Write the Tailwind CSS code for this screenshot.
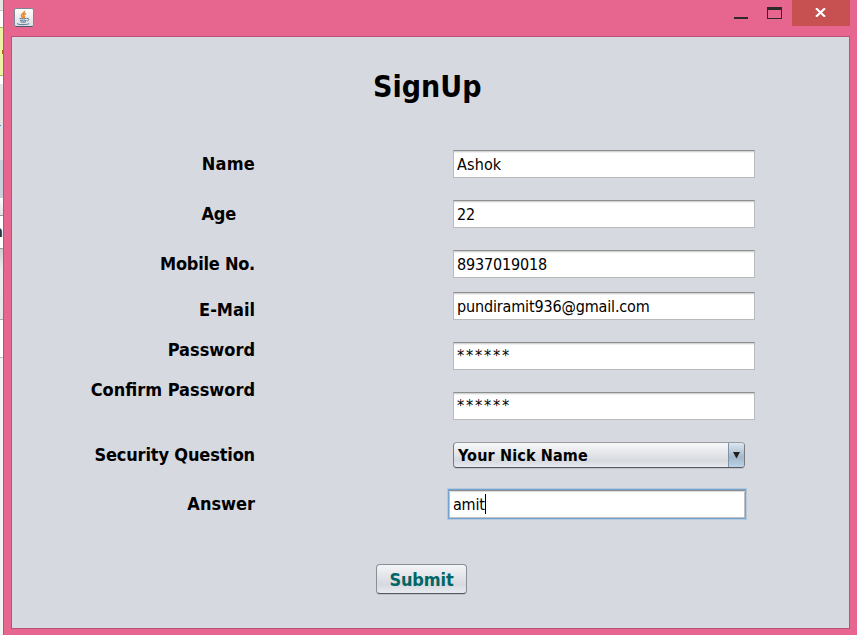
<!DOCTYPE html>
<html lang="en">
<head>
<meta charset="utf-8">
<title>SignUp</title>
<script src="https://cdn.jsdelivr.net/npm/@tailwindcss/browser@4"></script>
</head>
<body class="w-[857px] h-[635px] overflow-hidden flex bg-[#e66690] font-['DejaVu_Sans_Condensed','DejaVu_Sans',sans-serif] text-black">
  <!-- window behind -->
  <div class="w-[3px] h-full shrink-0 flex flex-col bg-[#f5f5f5] overflow-hidden">
    <div class="h-[11px] bg-[#e4e4e4] border-b border-[#c9c9c9]"></div>
    <div class="h-[16px] bg-white"></div>
    <div class="h-[49px] bg-[#edf4a6] border-y border-[#a9b85a] pt-[22px]"><div class="w-[1px] h-[4px] ml-[2px] bg-[#a8641c]"></div></div>
    <div class="h-[8px] bg-white"></div>
    <div class="h-[76px] bg-[#e3e3e3] pt-[41px]"><div class="w-px h-px bg-[#3b8fd0]"></div></div>
    <div class="h-[38px] bg-[#c9d2da]"></div>
    <div class="h-[18px] bg-gradient-to-b from-white to-[#e2e2e2] border-b border-[#999]"></div>
    <div class="h-[33px] bg-white border-b border-[#999] text-[16px] leading-[32px] font-bold text-[#333] flex justify-end">a</div>
    <div class="h-[71px] bg-gradient-to-b from-[#cfcfcf] via-[#eeeeee] via-30% to-[#e6e6e6] border-b border-[#aaa]"></div>
    <div class="h-[38px] bg-white border-b border-[#bbb]"></div>
  </div>
  <div class="w-[854px] h-full shrink-0 flex flex-col border-l border-[#b9527a]">
    <header class="h-[36px] shrink-0 flex items-start pl-[10px]">
      <svg class="mt-[8px]" width="20" height="20" viewBox="0 0 20 20" fill="none">
        <defs><linearGradient id="g" x1="0" y1="0" x2="0" y2="1"><stop offset="0" stop-color="#fff"/><stop offset="1" stop-color="#d9dde2"/></linearGradient></defs>
        <rect x=".5" y=".5" width="19" height="18" rx="1.5" fill="url(#g)" stroke="#7c8798"/>
        <path d="M1.5 18.5h17" stroke="#4b5a72"/>
        <path d="M10.500 3c.5 2-3 2.700-3 4.600 0 1 .8 1.600 1.500 2.400M12 5.500c-2 .8-2.700 1.500-2 2.700.6.900.4 1.300-.2 2" stroke="#ee8428" stroke-width="1.700"/>
        <path d="M5.500 10.300c1.500.8 5.500.8 7 0M6 12.300c1.800.8 5 .8 6.500 0M6.500 13.800c1.500.6 4 .6 5.500 0M13 10.500c2.400-.6 2.400 1.800.3 2.500M4 15.200c-1.500 1 1 1.400 4.800 1.400s6.500-.6 6.200-1.300" stroke="#56748e" stroke-width="1"/>
      </svg>
      <div class="ml-auto flex">
        <div class="w-[14px] h-[2px] mt-[17px] bg-[#2b2b2b]"></div>
        <div class="w-[15px] h-[12px] mt-[7px] ml-[19px] border border-t-[3px] border-[#2b2b2b]"></div>
        <div class="w-[58px] h-[26px] ml-[10px] mr-[7px] bg-[#c75050] flex justify-center">
          <svg class="mt-[8px] mr-[1px]" width="11" height="9" viewBox="0 0 11 9"><path d="M1 .3 10 8.700M10 .3 1 8.700" stroke="#fff" stroke-width="2.200"/></svg>
        </div>
      </div>
    </header>
    <main class="w-[839px] h-[593px] ml-[7px] border border-[#b9527a] bg-[#d6d9e0] shrink-0">
      <h1 class="h-[113px] pt-[32px] pl-[361px] text-[30px] leading-[36px] font-bold whitespace-nowrap">SignUp</h1>
      <div class="flex">
        <div class="w-[243px] flex flex-col items-end text-[18px] leading-[20px] font-bold whitespace-nowrap pt-[4px]">
          <label class="tracking-[0.2px]">Name</label>
          <label class="mt-[30px] mr-[19px] tracking-[-0.2px]">Age</label>
          <label class="mt-[30px] tracking-[-0.25px]">Mobile No.</label>
          <label class="mt-[26px]">E-Mail</label>
          <label class="mt-[20px]">Password</label>
          <label class="mt-[20px]">Confirm Password</label>
          <label class="mt-[45px] tracking-[-0.15px]">Security Question</label>
          <label class="mt-[29px]">Answer</label>
        </div>
        <div class="ml-[198px] flex flex-col text-[16px] whitespace-nowrap">
          <div class="w-[302px] h-[28px] bg-white border border-[#b8babd] border-t-[#8c8e91] shadow-[inset_0_1px_0_#d5d5d5,inset_0_2px_0_#f0f0f0] pl-[3px] leading-[28px] tracking-[0.15px]">Ashok</div>
          <div class="w-[302px] h-[28px] mt-[22px] bg-white border border-[#b8babd] border-t-[#8c8e91] shadow-[inset_0_1px_0_#d5d5d5,inset_0_2px_0_#f0f0f0] pl-[3px] leading-[28px] tracking-[-0.15px]">22</div>
          <div class="w-[302px] h-[28px] mt-[22px] bg-white border border-[#b8babd] border-t-[#8c8e91] shadow-[inset_0_1px_0_#d5d5d5,inset_0_2px_0_#f0f0f0] pl-[3px] leading-[28px] tracking-[-0.15px]">8937019018</div>
          <div class="w-[302px] h-[28px] mt-[14px] bg-white border border-[#b8babd] border-t-[#8c8e91] shadow-[inset_0_1px_0_#d5d5d5,inset_0_2px_0_#f0f0f0] pl-[3px] leading-[28px] tracking-[-0.15px]">pundiramit936@gmail.com</div>
          <div class="w-[302px] h-[28px] mt-[22px] bg-white border border-[#b8babd] border-t-[#8c8e91] shadow-[inset_0_1px_0_#d5d5d5,inset_0_2px_0_#f0f0f0] pl-[3px] leading-[26px] tracking-[1.800px]">******</div>
          <div class="w-[302px] h-[28px] mt-[22px] bg-white border border-[#b8babd] border-t-[#8c8e91] shadow-[inset_0_1px_0_#d5d5d5,inset_0_2px_0_#f0f0f0] pl-[3px] leading-[26px] tracking-[1.800px]">******</div>
          <div class="w-[292px] h-[26px] mt-[22px] flex rounded-[4px] border border-[#777b82] border-t-[#999ca3] border-b-[#565a61] bg-gradient-to-b from-[#f7f8fa] via-[#d6d9df] via-75% to-[#e8ebf0] shadow-[0_1px_0_#bfc2c9] overflow-hidden">
            <span class="flex-1 pl-[4px] font-bold text-[16px] leading-[25px] tracking-[0.15px]">Your Nick Name</span>
            <span class="w-[16px] border-l border-[#7d94a8] bg-gradient-to-b from-[#dce6ef] via-[#a3b8cc] via-60% to-[#bdd3e6] flex justify-center pt-[9px]">
              <svg width="7" height="7" viewBox="0 0 7 7"><path d="M0 0h7L3.500 6.500z" fill="#1e1e1e"/></svg>
            </span>
          </div>
          <div class="w-[300px] h-[32px] mt-[20px] -ml-[6px] border border-[#b4c8de] bg-white">
            <div class="h-full border-2 border-[#73a4d1] border-l-[#73a4d1] border-r-[#73a4d1] border-x-[1px] border-y-[1px] shadow-[inset_0_1px_0_#8c8e91,inset_0_2px_0_#ddd,inset_1px_-1px_0_#c0c0c0,inset_-1px_0_0_#c0c0c0] flex pl-[4px] leading-[29px] tracking-[-0.2px]">amit<span class="w-px h-[20px] mt-[4px] bg-black"></span></div>
          </div>
        </div>
      </div>
      <div class="w-[91px] h-[30px] mt-[44px] ml-[364px] rounded-[4px] border border-[#8b8e95] border-b-[#55585e] bg-gradient-to-b from-[#f4f5f7] via-[#d6d9df] via-70% to-[#e8ebf0] shadow-[0_1px_0_#bfc2c9] text-center text-[18px] leading-[29px] tracking-[-0.15px] font-bold text-[#006666]">Submit</div>
    </main>
  </div>
</body>
</html>
